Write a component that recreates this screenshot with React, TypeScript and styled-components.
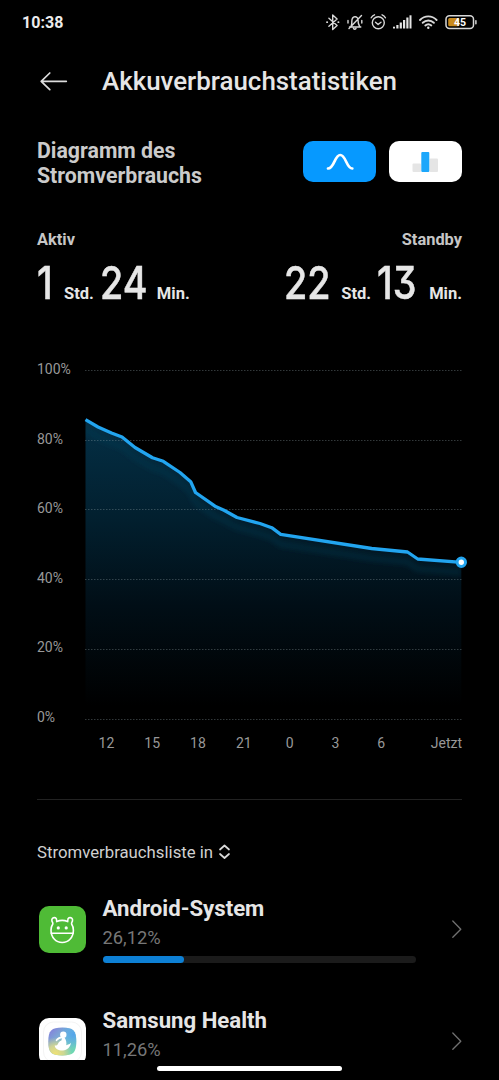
import React from "react";
import styled, { createGlobalStyle } from "styled-components";

const GlobalStyle = createGlobalStyle`
  * { box-sizing: border-box; }
  html, body { margin: 0; background: #000; }
  body { font-family: Roboto, "Noto Sans", sans-serif; color: #e6e6e6; }
  svg { display: block; flex: none; overflow: visible; }
`;

const Screen = styled.div`
  position: relative;
  width: 499px;
  height: 1080px;
  background: #000;
  overflow: hidden;
  display: flex;
  flex-direction: column;
`;

const StatusBar = styled.div`
  height: 45px;
  padding: 0 22px;
  display: flex;
  justify-content: space-between;
  align-items: center;
`;

const Clock = styled.span`
  font-size: 16px;
  font-weight: 700;
  letter-spacing: 0.05px;
  color: #ececec;
`;

const Header = styled.header`
  height: 72px;
  padding-left: 40px;
  display: flex;
  align-items: center;
  gap: 35px;
`;

const Title = styled.h1`
  margin: 0;
  font-size: 25.9px;
  font-weight: 500;
  line-height: 32px;
  white-space: nowrap;
`;

const ChartHeader = styled.section`
  height: 92px;
  padding: 21px 37px 0;
  display: flex;
  justify-content: space-between;
  align-items: flex-start;
`;

const ChartTitle = styled.h2`
  margin: 0;
  font-size: 21.3px;
  font-weight: 700;
  line-height: 25px;
  color: #cbcbcb;
`;

const Toggle = styled.div`
  display: flex;
  gap: 13px;
  padding-top: 3px;
`;

const ToggleButton = styled.button<{ $active?: boolean }>`
  width: 73px;
  height: 41px;
  padding: 0;
  border: 0;
  border-radius: 10px;
  display: flex;
  align-items: center;
  justify-content: center;
  background: ${(p) => (p.$active ? "#0699ff" : "#fff")};
`;

const Stats = styled.section`
  height: 152px;
  padding: 21px 37px 0;
  display: flex;
  justify-content: space-between;
`;

const Stat = styled.div<{ $end?: boolean }>`
  display: flex;
  flex-direction: column;
  align-items: ${(p) => (p.$end ? "flex-end" : "flex-start")};
`;

const StatLabel = styled.div`
  font-size: 16.4px;
  font-weight: 700;
  line-height: 20px;
  color: #c6c6c6;
`;

const Duration = styled.div`
  display: flex;
  align-items: baseline;
  height: 56px;
  margin-top: 5px;
  line-height: 56px;
`;

const Digits = styled.span<{ $width: number }>`
  width: ${(p) => p.$width}px;
  font-family: Inter, Roboto, sans-serif;
  font-size: 45px;
  font-weight: 500;
  font-feature-settings: "cv09" 1;
  -webkit-text-stroke: 0.5px currentColor;
  transform: scaleX(0.84);
  transform-origin: left;
  white-space: nowrap;
`;

const Unit = styled.span<{ $gap?: number }>`
  font-size: 16.5px;
  font-weight: 700;
  margin-right: ${(p) => p.$gap ?? 0}px;
`;

const Chart = styled.section`
  padding: 0 37px;
  display: flex;
  height: 364px;
`;

const YAxis = styled.div`
  width: 48px;
  height: 364px;
  display: flex;
  flex-direction: column;
  justify-content: space-between;
`;

const AxisLabel = styled.span`
  font-size: 14px;
  line-height: 16px;
  color: #989898;
`;

const XAxis = styled.div`
  height: 74px;
  padding: 10px 37px 0 83.5px;
  display: flex;
`;

const Tick = styled(AxisLabel)`
  width: 45.8px;
  text-align: center;
`;

const LastTick = styled(AxisLabel)`
  margin-left: auto;
`;

const Divider = styled.hr`
  width: 425px;
  height: 1px;
  margin: 0 37px;
  border: 0;
  background: #222;
`;

const ListHeading = styled.div`
  height: 93px;
  padding: 42px 37px 0;
  display: flex;
  gap: 6px;
  font-size: 16.75px;
  line-height: 20px;
  color: #d0d0d0;
`;

const AppList = styled.div`
  height: 166.5px;
  overflow: hidden;
`;

const AppRow = styled.div`
  height: 112px;
  padding: 0 37px 0 39px;
  display: flex;
  align-items: flex-start;
`;

const AppIcon = styled.div<{ $bg: string }>`
  width: 47px;
  height: 47px;
  margin: 13px 16.5px 0 0;
  border-radius: 10px;
  background: ${(p) => p.$bg};
  flex: none;
`;

const AppInfo = styled.div`
  width: 313.5px;
  margin-right: 36.5px;
`;

const AppName = styled.div`
  font-size: 22.2px;
  font-weight: 700;
  line-height: 30px;
`;

const AppShare = styled.div`
  font-size: 18.3px;
  line-height: 30px;
  color: #777;
`;

const Track = styled.div`
  margin-top: 2.5px;
  height: 7.5px;
  border-radius: 4px;
  background: #1b1b1b;
`;

const Fill = styled.div`
  height: 100%;
  border-radius: 4px;
  background: #0d80d5;
`;

const HomeIndicator = styled.div`
  position: absolute;
  left: 157px;
  top: 1066px;
  width: 184.5px;
  height: 5px;
  border-radius: 3px;
  background: #fff;
`;

const StatusIcons = () => (
  <svg width="152" height="24" viewBox="325 11 152 24" fill="none" stroke="#d8d8d8" strokeWidth="1.4" strokeLinecap="round" strokeLinejoin="round">
    <path d="M328.9 18.3l8.2 7.2-4.4 4V15l4.4 4-8.2 7.2" />
    <path d="M327 22.2h.2M338.3 22.2h.2" strokeWidth="1.8" />
    <path d="M349.500 27h11.300M351 26.500c1-2 .8-3.500 .8-5 0-6 6.200-6 6.200-1.500 0 3.500 .3 4.500 1.700 6.500M353.500 28.500c.8 1 1.700 1 2.500 0M361.500 15.500L349 28.500M348 20.500v2.500M361.800 20.500v2.500" />
    <circle cx="378.300" cy="22.800" r="6" />
    <path d="M375.500 22.200l2.600 2.300 2.900-2.300M371.200 17.800c.8-1.600 1.800-2.500 3.300-3M385.400 17.800c-.8-1.600-1.800-2.500-3.300-3" />
    <g stroke="none" fill="#e4e4e4">
      <rect x="393" y="26.700" width="2" height="1.800" />
      <rect x="396.300" y="25" width="2.200" height="3.500" />
      <rect x="399.700" y="22.500" width="2.200" height="6" />
      <rect x="403" y="20" width="2.200" height="8.500" />
      <rect x="406.300" y="17.500" width="2.200" height="11" />
      <rect x="409.500" y="15.300" width="2" height="13.200" />
    </g>
    <path d="M420 20c4.800-4.800 11.800-4.800 16.600 0M422.700 22.800c3.300-3.100 7.900-3.100 11.200 0M425.300 25.500c1.900-1.600 4.100-1.600 6 0" strokeWidth="1.900" />
    <circle cx="428.300" cy="27.700" r="1.200" fill="#e4e4e4" stroke="none" />
    <rect x="446" y="15.800" width="27.500" height="12.600" rx="3.500" strokeWidth="1.500" />
    <rect x="448.200" y="18" width="11" height="8.200" rx="1.500" fill="#c98a1c" stroke="none" />
    <path d="M475.900 20.700v3" strokeWidth="1.500" />
    <text x="460" y="26.400" textAnchor="middle" fill="#fff" stroke="none" fontFamily="Roboto, sans-serif" fontWeight="700" fontSize="10.500">45</text>
  </svg>
);

const BackArrow = () => (
  <svg width="27" height="20" viewBox="0 0 27 20" fill="none" stroke="#dcdcdc" strokeWidth="1.7" strokeLinecap="round" strokeLinejoin="round">
    <path d="M26.300 10.300H1.200M9.800 2L1.200 10.300l8.600 8.300" />
  </svg>
);

const CurveIcon = () => (
  <svg width="28" height="18" viewBox="0 0 28 18" fill="none" stroke="#fff" strokeWidth="2.700" strokeLinecap="round">
    <path d="M2 15.500C8.500 15.500 8.500 2 14.200 2S20.500 15.500 26.300 15.500" />
  </svg>
);

const BarsIcon = () => (
  <svg width="27" height="21" viewBox="0 0 27 21">
    <rect x="0.500" y="12.500" width="8.500" height="8.500" rx="1" fill="#e5e5e5" />
    <rect x="17.500" y="7.500" width="8.500" height="13.500" rx="1" fill="#e5e5e5" />
    <rect x="9.300" y="1" width="8" height="20" rx="1" fill="#1ca7fb" />
  </svg>
);

const SortIcon = () => (
  <svg width="11" height="20" viewBox="0 0 11 20" fill="none" stroke="#dadada" strokeWidth="1.700" strokeLinecap="round" strokeLinejoin="round">
    <path d="M1 7.500l4.500-4 4.500 4M1 12l4.500 4L10 12" />
  </svg>
);

const Chevron = () => (
  <svg width="10" height="18" viewBox="0 0 10 18" style={{ marginTop: 26.5 }} fill="none" stroke="#707070" strokeWidth="1.300" strokeLinecap="round" strokeLinejoin="round">
    <path d="M0.800 1l8 8.200-8 8" />
  </svg>
);

const AndroidGlyph = () => (
  <svg width="47" height="47" viewBox="0 0 47 47" fill="none" stroke="#fff" strokeWidth="1.600" strokeLinecap="round" strokeLinejoin="round">
    <path d="M17.700 15.600c3.500-1.600 7.500-1.600 11 0 .1-1.500-.3-3 1.300-3.800 2-.8 4 .8 3.500 3-.3 1.400-1.300 2-.9 3.200 1.300 2 1.800 4 1.800 6.200 0 7-4.800 12.300-11.200 12.300S12 31.200 12 24.200c0-2.200.5-4.200 1.800-6.200.4-1.200-.6-1.800-.9-3.200-.5-2.200 1.500-3.800 3.500-3 1.600.8 1.200 2.300 1.300 3.800z" />
    <path d="M12.300 27.200h21.800" />
    <g fill="#fff" stroke="none">
      <circle cx="19.300" cy="21.900" r="1.600" />
      <circle cx="27.200" cy="21.900" r="1.600" />
    </g>
  </svg>
);

const HealthGlyph = () => (
  <svg width="47" height="47" viewBox="0 0 47 47">
    <defs>
      <linearGradient id="hBase" x1="0" y1="0" x2="1" y2="1">
        <stop offset="0" stopColor="#8577dc" />
        <stop offset="0.500" stopColor="#79bfd2" />
        <stop offset="1" stopColor="#69dfa8" />
      </linearGradient>
      <radialGradient id="hWarm" cx="0.250" cy="0.950" r="0.600">
        <stop offset="0" stopColor="#f1e273" />
        <stop offset="0.500" stopColor="#ddd98a" stopOpacity="0.850" />
        <stop offset="1" stopColor="#ddd98a" stopOpacity="0" />
      </radialGradient>
      <radialGradient id="hBlue" cx="0.900" cy="0.250" r="0.500">
        <stop offset="0" stopColor="#55a5ec" />
        <stop offset="1" stopColor="#55a5ec" stopOpacity="0" />
      </radialGradient>
    </defs>
    <rect x="4.500" y="4" width="38" height="40" rx="10" fill="none" stroke="#f4f4f4" />
    {["hBase", "hWarm", "hBlue"].map((id) => (
      <path key={id} d="M23.300 9.500c11 0 14 3 14 14s-3 14-14 14-14-3-14-14 3-14 14-14z" fill={`url(#${id})`} />
    ))}
    <circle cx="24.300" cy="16.800" r="3.200" fill="#fff" />
    <path d="M25.500 19.500c1.800 2.500 2.200 5.300 1.700 7.800 2-.4 3.500-1.200 4.800-2.500-.5 4.500-4 7.500-8 7.700-4.500.2-7.800-1.500-8.300-5 1.500.3 2.500-.2 3.200-1.500.7-1.800 2-3 3.500-3.600l.6-2.400z" fill="#fff" />
    <path d="M17.500 22.300c1.700-2.300 3.500-3 6-2.900" fill="none" stroke="#fff" strokeWidth="1.600" strokeLinecap="round" />
  </svg>
);

const gridLines = [9.5, 79.5, 148.5, 218.5, 288.5, 358.5];
const linePath =
  "M0.500 58.700L13 66L26.500 72L37 76L50 86.500L67.500 96.700L78.300 100.300L95 111.500L105.700 120.700L110.500 131.500L130 145.200L139 149.300L152 156.500L175 162.500L186.700 166.700L195.700 173.300L286.700 187.500L322.500 191L332.700 198L376.300 201.300";

const BatteryCurve = () => (
  <svg width="377" height="364" viewBox="0 0 377 364">
    <defs>
      <linearGradient id="area" gradientUnits="userSpaceOnUse" x1="0" y1="60" x2="0" y2="345">
        <stop offset="0" stopColor="#042f45" />
        <stop offset="0.350" stopColor="#021f2e" />
        <stop offset="0.650" stopColor="#010e16" />
        <stop offset="1" stopColor="#000000" />
      </linearGradient>
      <clipPath id="under">
        <path d={`${linePath}V358H0.500Z`} />
      </clipPath>
      <filter id="soft" x="-10%" y="-10%" width="120%" height="130%">
        <feGaussianBlur stdDeviation="2.500" />
      </filter>
    </defs>
    <path d={`${linePath}V358H0.500Z`} fill="url(#area)" />
    <g clipPath="url(#under)">
      <path d={linePath} transform="translate(0 10)" fill="none" stroke="#0e4256" strokeOpacity="0.320" strokeWidth="6" filter="url(#soft)" />
    </g>
    {gridLines.map((y) => (
      <line key={y} x1="0" x2="377" y1={y} y2={y} stroke="#8fa0a5" strokeOpacity="0.350" strokeDasharray="1.500 1.500" />
    ))}
    <path d={linePath} fill="none" stroke="#22a5f0" strokeWidth="3.300" strokeLinejoin="round" />
    <circle cx="376.300" cy="201.300" r="4.200" fill="#fff" stroke="#22a5f0" strokeWidth="3" />
  </svg>
);

const apps = [
  { name: "Android-System", share: "26,12%", fill: 26.12, bg: "#4fbb36", glyph: <AndroidGlyph /> },
  { name: "Samsung Health", share: "11,26%", fill: 11.26, bg: "#fff", glyph: <HealthGlyph /> },
];

export default function App() {
  return (
    <Screen>
      <GlobalStyle />
      <StatusBar>
        <Clock>10:38</Clock>
        <StatusIcons />
      </StatusBar>
      <Header>
        <BackArrow />
        <Title>Akkuverbrauchstatistiken</Title>
      </Header>
      <ChartHeader>
        <ChartTitle>
          Diagramm des
          <br />
          Stromverbrauchs
        </ChartTitle>
        <Toggle>
          <ToggleButton $active aria-label="Kurve">
            <CurveIcon />
          </ToggleButton>
          <ToggleButton aria-label="Balken">
            <BarsIcon />
          </ToggleButton>
        </Toggle>
      </ChartHeader>
      <Stats>
        <Stat>
          <StatLabel>Aktiv</StatLabel>
          <Duration>
            <Digits $width={27}>1</Digits>
            <Unit $gap={6}>Std.</Unit>
            <Digits $width={57}>24</Digits>
            <Unit>Min.</Unit>
          </Duration>
        </Stat>
        <Stat $end>
          <StatLabel>Standby</StatLabel>
          <Duration>
            <Digits $width={57}>22</Digits>
            <Unit $gap={6}>Std.</Unit>
            <Digits $width={52}>13</Digits>
            <Unit>Min.</Unit>
          </Duration>
        </Stat>
      </Stats>
      <Chart>
        <YAxis>
          {["100%", "80%", "60%", "40%", "20%", "0%"].map((t) => (
            <AxisLabel key={t}>{t}</AxisLabel>
          ))}
        </YAxis>
        <BatteryCurve />
      </Chart>
      <XAxis>
        {["12", "15", "18", "21", "0", "3", "6"].map((t) => (
          <Tick key={t}>{t}</Tick>
        ))}
        <LastTick>Jetzt</LastTick>
      </XAxis>
      <Divider />
      <ListHeading>
        <span>Stromverbrauchsliste in</span>
        <SortIcon />
      </ListHeading>
      <AppList>
        {apps.map((a) => (
          <AppRow key={a.name}>
            <AppIcon $bg={a.bg}>{a.glyph}</AppIcon>
            <AppInfo>
              <AppName>{a.name}</AppName>
              <AppShare>{a.share}</AppShare>
              <Track>
                <Fill style={{ width: `${a.fill}%` }} />
              </Track>
            </AppInfo>
            <Chevron />
          </AppRow>
        ))}
      </AppList>
      <HomeIndicator />
    </Screen>
  );
}
